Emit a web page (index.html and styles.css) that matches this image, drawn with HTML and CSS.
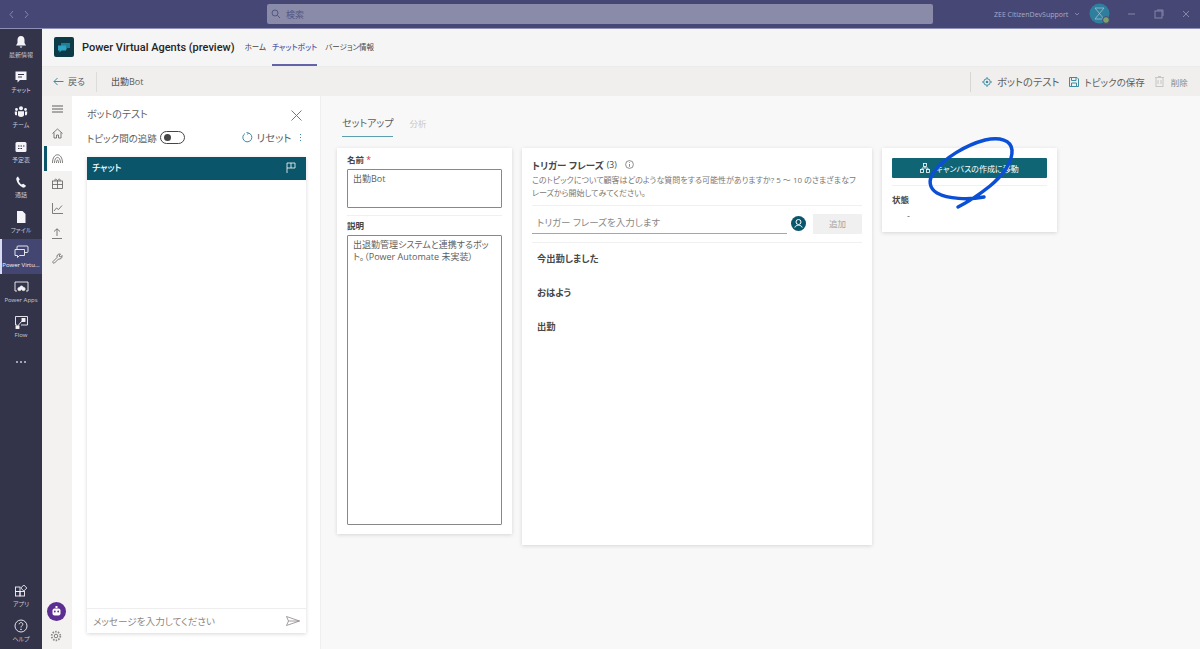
FILE: index.html
```html
<!DOCTYPE html>
<html lang="ja">
<head>
    <meta charset="UTF-8">
    <title>Power Virtual Agents</title>
    <link rel="stylesheet" href="styles.css">
</head>
<body>
    <!-- Teams title bar -->
    <div class="titlebar">
        <div class="historyNav">
            <svg width="7" height="9" viewBox="0 0 7 9"><path d="M5 1L2 4.5L5 8" class="dimStroke"/></svg>
            <svg width="7" height="9" viewBox="0 0 7 9"><path d="M2 1L5 4.5L2 8" class="dimStroke"/></svg>
        </div>
        <div class="searchBox">
            <svg width="10" height="10" viewBox="0 0 10 10"><circle cx="4" cy="4" r="3" class="searchStroke"/><path d="M6.3 6.3L9 9" class="searchStroke"/></svg>
            <span>検索</span>
        </div>
        <div class="account">
            <span class="accountName">ZEE CitizenDevSupport</span>
            <svg width="6" height="4" viewBox="0 0 6 4"><path d="M1 1L3 3L5 1" class="dimStroke"/></svg>
            <svg class="avatar" width="22" height="22" viewBox="0 0 22 22">
                <circle cx="10.5" cy="10.5" r="10" fill="#2d7f9d"/>
                <path d="M6 5H15L6 16H15Z" fill="none" stroke="#9fc0cf" stroke-width="0.8"/>
                <circle cx="17" cy="17" r="3.4" fill="#7f9f6c" stroke="#464775"/>
            </svg>
        </div>
        <div class="windowButtons">
            <svg width="10" height="10" viewBox="0 0 10 10"><path d="M1 5H8" class="dimStroke"/></svg>
            <svg width="10" height="10" viewBox="0 0 10 10"><rect x="1" y="2" width="7" height="7" class="dimStroke"/><path d="M3 1H9V7" class="dimStroke"/></svg>
            <svg width="10" height="10" viewBox="0 0 10 10"><path d="M2 2L8 8M8 2L2 8" class="dimStroke"/></svg>
        </div>
    </div>

    <div class="shell">
        <!-- Teams app rail -->
        <nav class="rail">
            <div class="railGroup">
                <div class="railItem">
                    <svg width="14" height="14" viewBox="0 0 14 14"><path d="M7 1C4.5 1 3.5 3 3.5 5V8L2 10.500H12L10.500 8V5C10.500 3 9.500 1 7 1Z" fill="#f4f4f8"/><path d="M5.500 11.500H8.500L7 13Z" fill="#f4f4f8"/></svg>
                    <span>最新情報</span>
                </div>
                <div class="railItem">
                    <svg width="14" height="14" viewBox="0 0 14 14"><path d="M1.500 1.500H12.500V10H6L3.500 12.500V10H1.500Z" fill="#f4f4f8"/><path d="M4 4.500H10M4 7H8" stroke="#33344a"/></svg>
                    <span>チャット</span>
                </div>
                <div class="railItem">
                    <svg width="14" height="14" viewBox="0 0 14 14" fill="#f4f4f8"><circle cx="7" cy="3.200" r="2"/><circle cx="2.500" cy="4.500" r="1.400"/><circle cx="11.500" cy="4.500" r="1.400"/><path d="M4 6.300H10V10C10 12.500 4 12.500 4 10Z"/><path d="M.8 6.500H3V10.200H1.500C.8 9.500.8 8 .8 6.500ZM11 6.500H13.200C13.200 8 13.200 9.500 12.500 10.200H11Z"/></svg>
                    <span>チーム</span>
                </div>
                <div class="railItem">
                    <svg width="14" height="14" viewBox="0 0 14 14"><rect x="1.500" y="2" width="11" height="10" rx="1.500" fill="#f4f4f8"/><path d="M4 6H5.500M6.500 6H8M9 6H10.500M4 8.500H5.500M6.500 8.500H8" stroke="#33344a"/></svg>
                    <span>予定表</span>
                </div>
                <div class="railItem">
                    <svg width="14" height="14" viewBox="0 0 14 14"><path d="M4 1.500L5.800 4.500L4.700 6C5.300 7.500 6.300 8.800 7.800 9.600L9.300 8.700L12 10.800C11.500 12.300 10 13 8.800 12.500C5.300 11 3 8 2.300 4.500C2.100 3.200 2.800 2 4 1.500Z" fill="#f4f4f8"/></svg>
                    <span>通話</span>
                </div>
                <div class="railItem">
                    <svg width="14" height="14" viewBox="0 0 14 14"><path d="M3 1H8.500L11.500 4V13H3Z" fill="#f4f4f8"/></svg>
                    <span>ファイル</span>
                </div>
                <div class="railItem railItemActive">
                    <svg width="15" height="14" viewBox="0 0 15 14" fill="none" stroke="#f4f4f8" stroke-width="0.9"><rect x="3" y="1" width="11" height="6.500" rx="1"/><path d="M1 4.500H10.500V10.500H5.500L3.500 12.500V10.500H1Z" fill="#444672"/></svg>
                    <span>Power Virtu...</span>
                </div>
                <div class="railItem">
                    <svg width="15" height="14" viewBox="0 0 15 14" fill="none" stroke="#f4f4f8" stroke-width="0.9"><path d="M3 11H1V2H14V11H12"/><circle cx="5.500" cy="9" r="1.600" fill="#f4f4f8"/><circle cx="9.500" cy="9" r="1.600" fill="#f4f4f8"/><circle cx="7.500" cy="7.500" r="1.500" fill="#f4f4f8"/></svg>
                    <span>Power Apps</span>
                </div>
                <div class="railItem">
                    <svg width="15" height="14" viewBox="0 0 15 14" fill="none" stroke="#f4f4f8" stroke-width="0.9"><path d="M3 10H1.500V1.500H13.500V10H7"/><path d="M2.500 12.500L7 7L8.500 6" /><rect x="8" y="3.500" width="3" height="3" fill="#f4f4f8"/><rect x="2" y="11" width="3" height="2.500" fill="#f4f4f8"/></svg>
                    <span>Flow</span>
                </div>
                <div class="railItem railMore">
                    <i></i><i></i><i></i>
                </div>
            </div>
            <div class="railGroup">
                <div class="railItem">
                    <svg width="14" height="14" viewBox="0 0 14 14" fill="none" stroke="#f4f4f8" stroke-width="0.9"><rect x="1.500" y="3" width="4.500" height="4.500"/><rect x="1.500" y="7.500" width="4.500" height="4.500"/><rect x="6" y="7.500" width="4.500" height="4.500"/><path d="M9.800 1L12.800 4L9.800 7L6.800 4Z"/></svg>
                    <span>アプリ</span>
                </div>
                <div class="railItem">
                    <svg width="14" height="14" viewBox="0 0 14 14" fill="none" stroke="#f4f4f8" stroke-width="0.9"><circle cx="7" cy="7" r="6"/><path d="M5.200 5.300C5.200 3 8.800 3 8.800 5.300C8.800 6.800 7 6.800 7 8.500"/><circle cx="7" cy="10.300" r="0.400"/></svg>
                    <span>ヘルプ</span>
                </div>
            </div>
        </nav>

        <div class="app">
            <!-- app header with tabs -->
            <header class="appHeader">
                <svg class="logo" width="20" height="20" viewBox="0 0 20 20">
                    <rect width="20" height="20" rx="2" fill="#0d3a47"/>
                    <path d="M7 6H16V11H13V13L11 11H7Z" fill="#1f7f99"/>
                    <path d="M4 8.500H12V13.500H7.500L5.500 15.500V13.500H4Z" fill="#2fa3c2"/>
                </svg>
                <span class="appName">Power Virtual Agents (preview)</span>
                <a class="appTab">ホーム</a>
                <a class="appTab appTabActive">チャットボット</a>
                <a class="appTab">バージョン情報</a>
            </header>

            <div class="toolbar">
                <div class="toolbarBack">
                    <svg width="11" height="9" viewBox="0 0 11 9" fill="none" stroke="#3f8ca3"><path d="M10.500 4.500H1M4.500 1L1 4.500L4.500 8"/></svg>
                    <span>戻る</span>
                </div>
                <div class="toolbarTitle">出勤Bot</div>
                <div class="toolbarActions">
                    <div class="toolbarAction">
                        <svg width="10" height="10" viewBox="0 0 10 10" fill="none" stroke="#3f8ca3"><circle cx="5" cy="5" r="3.300"/><circle cx="5" cy="5" r="1.300" fill="#3f8ca3" stroke="none"/><path d="M5 0V1.500M5 8.500V10M0 5H1.500M8.500 5H10"/></svg>
                        <span>ボットのテスト</span>
                    </div>
                    <div class="toolbarAction">
                        <svg width="10" height="10" viewBox="0 0 10 10" fill="none" stroke="#3f8ca3"><path d="M.5.500H8L9.500 2V9.500H.5Z"/><path d="M2.500.500V3.500H7V.500M2.500 9.500V6H7.500V9.500"/></svg>
                        <span>トピックの保存</span>
                    </div>
                    <div class="toolbarAction toolbarActionOff">
                        <svg width="9" height="11" viewBox="0 0 9 11" fill="none" stroke="#c8c6c4"><rect x="1" y="1.500" width="7" height="9"/><path d="M0 1.500H9M3 .5H6M3 4V8M6 4V8"/></svg>
                        <span>削除</span>
                    </div>
                </div>
            </div>

            <div class="workspace">
                <!-- bot side menu -->
                <aside class="sideMenu">
                    <div class="sideGroup">
                        <div class="sideItem">
                            <svg width="11" height="8" viewBox="0 0 11 8" stroke="#605e5c"><path d="M0 1H11M0 4H11M0 7H11"/></svg>
                        </div>
                        <div class="sideItem">
                            <svg width="11" height="11" viewBox="0 0 11 11" fill="none" stroke="#605e5c" stroke-width="0.8"><path d="M.5 5.500L5.500 1L10.500 5.500M2 4.500V10H4.500V7H6.500V10H9V4.500"/></svg>
                        </div>
                        <div class="sideItem sideItemActive">
                            <svg width="11" height="10" viewBox="0 0 11 10" fill="none" stroke="#605e5c" stroke-width="0.8"><path d="M.5 9C.5 -2 10.500 -2 10.500 9"/><path d="M2.500 9C2.500 1.500 8.500 1.500 8.500 9"/><path d="M4.500 9C4.500 5 6.500 5 6.500 9"/></svg>
                        </div>
                        <div class="sideItem">
                            <svg width="11" height="11" viewBox="0 0 11 11" fill="none" stroke="#605e5c" stroke-width="0.8"><rect x=".5" y="3" width="10" height="7.500"/><path d="M5.500 3V10.500M.5 6.500H10.500M3 3C2 1 4.500 0 5.500 3C6.500 0 9 1 8 3"/></svg>
                        </div>
                        <div class="sideItem">
                            <svg width="11" height="11" viewBox="0 0 11 11" fill="none" stroke="#605e5c" stroke-width="0.8"><path d="M.5 0V10.500H11M2 8L4.500 5L6.500 6.500L10 2.500"/></svg>
                        </div>
                        <div class="sideItem">
                            <svg width="10" height="11" viewBox="0 0 10 11" fill="none" stroke="#605e5c" stroke-width="0.8"><path d="M5 8V.8M2 3.500L5 .8L8 3.500M0 10.500H10"/></svg>
                        </div>
                        <div class="sideItem">
                            <svg width="11" height="11" viewBox="0 0 11 11" fill="none" stroke="#605e5c" stroke-width="0.8"><path d="M1 8.500L5 4.500C4.500 2.500 6 .5 8.500 1L7 3L8.500 4L10 2.500C10.500 5 8.500 6.500 6.500 6L2.500 10C1.500 10.800 .3 9.500 1 8.500Z"/></svg>
                        </div>
                    </div>
                    <div class="sideGroup sideBottom">
                        <svg width="19" height="19" viewBox="0 0 19 19">
                            <circle cx="9.500" cy="9.500" r="9.500" fill="#5c2e91"/>
                            <rect x="5.500" y="6.500" width="8" height="7" rx="2" fill="#fff"/>
                            <rect x="8.500" y="4" width="2" height="2" fill="#fff"/>
                            <circle cx="7.800" cy="9.500" r="0.900" fill="#5c2e91"/>
                            <circle cx="11.200" cy="9.500" r="0.900" fill="#5c2e91"/>
                        </svg>
                        <svg width="12" height="12" viewBox="0 0 12 12" fill="none" stroke="#605e5c" stroke-width="0.8"><circle cx="6" cy="6" r="1.800"/><circle cx="6" cy="6" r="4.300" stroke-width="1.800" stroke-dasharray="1.500 1.200" opacity="0.700"/></svg>
                    </div>
                </aside>

                <!-- test bot panel -->
                <section class="testPanel">
                    <div class="panelHead">
                        <span>ボットのテスト</span>
                        <svg width="11" height="11" viewBox="0 0 11 11" stroke="#3f8ca3"><path d="M.5.500L10.500 10.500M10.500.500L.5 10.500"/></svg>
                    </div>
                    <div class="panelControls">
                        <span>トピック間の追跡</span>
                        <div class="toggle"><i></i></div>
                        <div class="resetGroup">
                            <svg width="11" height="11" viewBox="0 0 11 11" fill="none" stroke="#3f8ca3" stroke-width="1"><path d="M3 1.500A4.500 4.500 0 1 0 6.500 1"/><path d="M4.500 .5L6.500 1L5.500 2.500"/></svg>
                            <span class="resetLabel">リセット</span>
                            <div class="dots"><i></i><i></i><i></i></div>
                        </div>
                    </div>
                    <div class="chatBox">
                        <div class="chatHead">
                            <span>チャット</span>
                            <svg width="10" height="11" viewBox="0 0 10 11" fill="none" stroke="#fff" stroke-width="0.8"><path d="M1 11V1H9V6H1"/><path d="M5 1V6"/></svg>
                        </div>
                        <div class="chatBody"></div>
                        <div class="chatInput">
                            <span>メッセージを入力してください</span>
                            <svg width="14" height="10" viewBox="0 0 14 10" fill="none" stroke="#8a8886" stroke-width="0.8"><path d="M.5.500L13.500 5L.5 9.500L2.500 5ZM2.500 5H13.500"/></svg>
                        </div>
                    </div>
                </section>

                <!-- topic editor -->
                <main class="editor">
                    <div class="editorTabs">
                        <span class="editorTab editorTabActive">セットアップ</span>
                        <span class="editorTab editorTabOff">分析</span>
                    </div>
                    <div class="cards">
                        <div class="card cardDetails">
                            <label class="fieldLabel">名前 <em>*</em></label>
                            <div class="textBox nameBox">出勤Bot</div>
                            <hr class="rule">
                            <label class="fieldLabel fieldLabelTight">説明</label>
                            <div class="textBox descBox">出退勤管理システムと連携するボット。（Power Automate 未実装）</div>
                        </div>

                        <div class="card cardPhrases">
                            <div class="phraseTitle">
                                <b>トリガー フレーズ</b> <span>(3)</span>
                                <svg width="9" height="9" viewBox="0 0 9 9" fill="none" stroke="#605e5c" stroke-width="0.7"><circle cx="4.500" cy="4.500" r="3.900"/><path d="M4.500 4V6.800M4.500 2.200V3"/></svg>
                            </div>
                            <p class="phraseHelp">このトピックについて顧客はどのような質問をする可能性がありますか? 5 ～ 10 のさまざまなフレーズから開始してみてください。</p>
                            <hr class="rule">
                            <div class="phraseEntry">
                                <div class="phraseInput">トリガー フレーズを入力します</div>
                                <svg width="15" height="15" viewBox="0 0 15 15" fill="none" stroke="#fff" stroke-width="1"><circle cx="7.500" cy="7.500" r="7.500" fill="#0b556a" stroke="none"/><circle cx="7.500" cy="6" r="2.500"/><path d="M3.800 11.500C4.500 8.500 10.500 8.500 11.200 11.500"/></svg>
                                <div class="addButton">追加</div>
                            </div>
                            <hr class="rule">
                            <ul class="phraseList">
                                <li>今出勤しました</li>
                                <li>おはよう</li>
                                <li>出勤</li>
                            </ul>
                        </div>

                        <div class="card cardStatus">
                            <div class="canvasButton">
                                <svg width="10" height="10" viewBox="0 0 10 10" fill="none" stroke="#fff" stroke-width="0.8"><rect x="3.500" y=".5" width="3" height="3"/><rect x=".5" y="6.500" width="3" height="3"/><rect x="6.500" y="6.500" width="3" height="3"/><path d="M5 3.500V5M2 6.500V5H8V6.500"/></svg>
                                <span>キャンバスの作成に移動</span>
                            </div>
                            <hr class="rule">
                            <div class="fieldLabel statusLabel">状態</div>
                            <div class="statusValue">-</div>
                        </div>
                    </div>
                </main>
            </div>
        </div>
    </div>

    <!-- pen mark drawn over the screenshot -->
    <svg class="penMark" width="1200" height="649" viewBox="0 0 1200 649" fill="none" stroke="#0a4fd6" stroke-width="3.500" stroke-linecap="round" stroke-linejoin="round">
        <path d="M984 197C968 200 948 199 937 193C929 188 928 180 934 172C944 158 966 145 985 140C1000 137 1011 140 1012 150C1013 162 1002 176 990 186C980 194 968 202 958 207"/>
    </svg>
</body>
</html>
```

FILE: styles.css
```css
* {
    box-sizing: border-box;
}

body {
    margin: 0;
    width: 1200px;
    height: 649px;
    overflow: hidden;
    font-family: "Open Sans", "Noto Sans CJK JP", sans-serif;
    font-feature-settings: "palt";
    font-size: 9px;
    color: #484644;
    background: #f8f8f8;
}

svg {
    flex: none;
    display: block;
}

p, ul {
    margin: 0;
    padding: 0;
}

hr.rule {
    border: 0;
    border-top: 1px solid #f0f0f0;
    margin: 0;
}

/* title bar */
.titlebar {
    height: 29px;
    background: #464775;
    border-bottom: 1px solid #8f90b5;
    display: flex;
    align-items: center;
}

.dimStroke {
    fill: none;
    stroke: #8486a8;
    stroke-width: 1;
}

.searchStroke {
    fill: none;
    stroke: #55567f;
    stroke-width: 1;
}

.historyNav {
    width: 267px;
    padding-left: 8px;
    display: flex;
    gap: 8px;
}

.searchBox {
    width: 666px;
    height: 20px;
    background: #8a8aa9;
    border-radius: 2px;
    display: flex;
    align-items: center;
    gap: 5px;
    padding-left: 4px;
    color: #55567f;
    font-size: 9px;
}

.account {
    width: 183px;
    padding-left: 61px;
    display: flex;
    align-items: center;
    gap: 3px;
}

.accountName {
    color: #a9aac4;
    font-size: 7px;
    white-space: nowrap;
    width: 77px;
}

.avatar {
    margin-left: 6px;
}

.windowButtons {
    display: flex;
    gap: 17px;
    margin-left: 11px;
}

/* shell */
.shell {
    display: flex;
    height: 620px;
}

.rail {
    width: 42px;
    background: #33344a;
    display: flex;
    flex-direction: column;
    justify-content: space-between;
    padding-bottom: 1px;
}

.railItem {
    height: 35px;
    display: flex;
    flex-direction: column;
    align-items: center;
    justify-content: center;
    gap: 2px;
    color: #c8c8d6;
    font-size: 6px;
    line-height: 8px;
    white-space: nowrap;
}

.railItemActive {
    background: #444672;
    border-left: 2px solid #d9dbf2;
    color: #f4f4f8;
    padding-right: 2px;
}

.railMore {
    flex-direction: row;
    gap: 2px;
}

.railMore i {
    width: 2px;
    height: 2px;
    background: #c8c8d6;
    border-radius: 50%;
}

.app {
    flex: 1;
    display: flex;
    flex-direction: column;
}

/* header */
.appHeader {
    height: 38px;
    background: #f5f5f5;
    border-bottom: 1px solid #ebebeb;
    padding-left: 12px;
    display: flex;
    align-items: center;
}

.logo {
    margin-right: 8px;
    margin-bottom: 1px;
}

.appName {
    font-family: Roboto, sans-serif;
    font-size: 11px;
    font-weight: 500;
    color: #252423;
    margin-right: 10px;
    white-space: nowrap;
}

.appTab {
    height: 100%;
    line-height: 36px;
    font-size: 7.500px;
    color: #484644;
    margin-right: 8px;
    white-space: nowrap;
}

.appTabActive {
    margin-left: -2px;
    font-size: 7.800px;
    color: #5b5fa8;
    font-weight: 500;
    border-bottom: 2px solid #6264a7;
}

/* toolbar */
.toolbar {
    height: 29px;
    background: #f1efed;
    display: flex;
    align-items: center;
    padding-left: 11px;
}

.toolbarBack {
    display: flex;
    align-items: center;
    gap: 4px;
    width: 44px;
    height: 20px;
    border-right: 1px solid #dedcda;
    color: #605e5c;
}

.toolbarTitle {
    margin-left: 14px;
    font-weight: 500;
    color: #605e5c;
}

.toolbarActions {
    margin-left: auto;
    width: 230px;
    height: 20px;
    border-left: 1px solid #d8d6d4;
    display: flex;
    align-items: center;
    gap: 10px;
    padding-left: 11px;
}

.toolbarAction {
    display: flex;
    align-items: center;
    gap: 5px;
    font-size: 9.500px;
    color: #605e5c;
    white-space: nowrap;
}

.toolbarAction:first-child {
    font-size: 10.300px;
}

.toolbarActionOff {
    gap: 7px;
    font-size: 8.500px;
    color: #8a8886;
}

/* workspace */
.workspace {
    flex: 1;
    display: flex;
    min-height: 0;
}

.sideMenu {
    width: 30px;
    background: #f3f2f1;
    display: flex;
    flex-direction: column;
    justify-content: space-between;
    padding-bottom: 7px;
}

.sideItem {
    height: 25px;
    display: flex;
    align-items: center;
    justify-content: center;
}

.sideItemActive {
    background: #fff;
    box-shadow: inset 2px 0 0 #f3f2f1, inset 5px 0 0 #0b556a;
}

.sideBottom {
    display: flex;
    flex-direction: column;
    align-items: center;
    gap: 9px;
    padding-right: 2px;
}

.testPanel {
    width: 249px;
    background: #fff;
    border-right: 1px solid #efefef;
    padding: 0 14px 16px 15px;
    display: flex;
    flex-direction: column;
}

.panelHead {
    height: 34px;
    display: flex;
    align-items: center;
    justify-content: space-between;
    padding-right: 4px;
    font-size: 10px;
    color: #605e5c;
}

.panelHead svg {
    margin-top: 4px;
}

.panelControls {
    height: 15px;
    margin-bottom: 12px;
    display: flex;
    align-items: center;
    font-size: 9.500px;
    color: #605e5c;
    white-space: nowrap;
}

.toggle {
    width: 25px;
    height: 13px;
    margin-left: 3px;
    border: 1px solid #484644;
    border-radius: 7px;
    padding: 2px 3px;
}

.toggle i {
    display: block;
    width: 7px;
    height: 7px;
    border-radius: 50%;
    background: #484644;
}

.resetGroup {
    margin-left: auto;
    display: flex;
    align-items: center;
    gap: 4px;
}

.resetLabel {
    font-size: 10.500px;
}

.dots {
    display: flex;
    flex-direction: column;
    gap: 1.500px;
    margin-left: 4px;
    margin-right: 5px;
}

.dots i {
    width: 1.500px;
    height: 1.500px;
    background: #3f8ca3;
}

.chatBox {
    flex: 1;
    display: flex;
    flex-direction: column;
    box-shadow: 0 1px 4px rgba(0, 0, 0, 0.16);
}

.chatHead {
    height: 23px;
    background: #0b556a;
    color: #fff;
    font-weight: 500;
    font-size: 9px;
    display: flex;
    align-items: center;
    justify-content: space-between;
    padding: 0 10px 2px 5px;
}

.chatBody {
    flex: 1;
}

.chatInput {
    height: 25px;
    border-top: 1px solid #eee;
    display: flex;
    align-items: center;
    justify-content: space-between;
    padding: 0 6px;
    color: #8a8886;
    font-size: 9.600px;
}

/* editor */
.editor {
    flex: 1;
    padding: 0 16px;
    background: #f8f8f8;
}

.editorTabs {
    height: 52px;
    padding: 18px 5px 0;
    display: flex;
    gap: 16px;
}

.editorTab {
    height: 23px;
    line-height: 19px;
    font-size: 10px;
    color: #605e5c;
}

.editorTabActive {
    border-bottom: 1px solid #5d9fb0;
}

.editorTabOff {
    font-size: 8.500px;
    color: #c8c6c4;
}

.cards {
    display: flex;
    align-items: flex-start;
    gap: 10px;
}

.card {
    background: #fff;
    box-shadow: 0 1px 4px rgba(0, 0, 0, 0.14);
    padding: 0 10px;
}

.cardDetails {
    width: 175px;
    height: 386px;
}

.fieldLabel {
    display: block;
    height: 21px;
    line-height: 24px;
    font-size: 8.500px;
    font-weight: 700;
    color: #484644;
}

.fieldLabelTight {
    height: 19px;
    line-height: 20px;
}

.fieldLabel em {
    font-style: normal;
    font-weight: 400;
    color: #c4314b;
}

.textBox {
    border: 1px solid #8a8886;
    border-radius: 1px;
    padding: 3px 5px;
    font-size: 9px;
    line-height: 12px;
    color: #605e5c;
}

.nameBox {
    height: 39px;
    margin-bottom: 7px;
}

.descBox {
    height: 290px;
}

.cardPhrases {
    width: 350px;
    height: 397px;
}

.phraseTitle {
    height: 24px;
    padding-top: 9px;
    display: flex;
    align-items: center;
    gap: 3px;
    font-size: 9.500px;
    color: #484644;
}

.phraseTitle b {
    font-weight: 700;
}

.phraseTitle svg {
    margin-left: 5px;
}

.phraseTitle span {
    font-size: 8.500px;
}

.phraseHelp {
    margin-top: 2px;
    height: 31px;
    font-size: 8px;
    line-height: 12.500px;
    color: #7a7876;
}

.phraseEntry {
    height: 36px;
    display: flex;
    align-items: center;
    padding-bottom: 1px;
}

.phraseInput {
    width: 255px;
    height: 21px;
    line-height: 20px;
    padding-left: 5px;
    border-bottom: 1px solid #a8a6a4;
    font-size: 9.500px;
    color: #8a8886;
}

.phraseEntry svg {
    margin: 0 7px 0 4px;
}

.addButton {
    flex: 1;
    height: 20px;
    background: #f0f0f0;
    color: #a8a6a4;
    line-height: 20px;
    text-align: center;
    font-size: 8.500px;
}

.phraseList {
    list-style: none;
    padding: 0 5px;
}

.phraseList li {
    height: 34px;
    line-height: 32px;
    font-size: 9.300px;
    font-weight: 700;
    color: #484644;
}

.cardStatus {
    width: 175px;
    height: 84px;
    padding-top: 10px;
}

.canvasButton {
    height: 20px;
    background: #106575;
    border-radius: 1px;
    color: #fff;
    font-size: 8px;
    display: flex;
    align-items: center;
    justify-content: center;
    gap: 5px;
    margin-bottom: 7px;
}

.statusLabel {
    height: 22px;
    line-height: 28px;
}

.statusValue {
    padding-left: 15px;
    line-height: 10px;
    margin-top: 3px;
    color: #605e5c;
}

/* pen mark */
.penMark {
    position: absolute;
    top: 0;
    left: 0;
    pointer-events: none;
}
```
